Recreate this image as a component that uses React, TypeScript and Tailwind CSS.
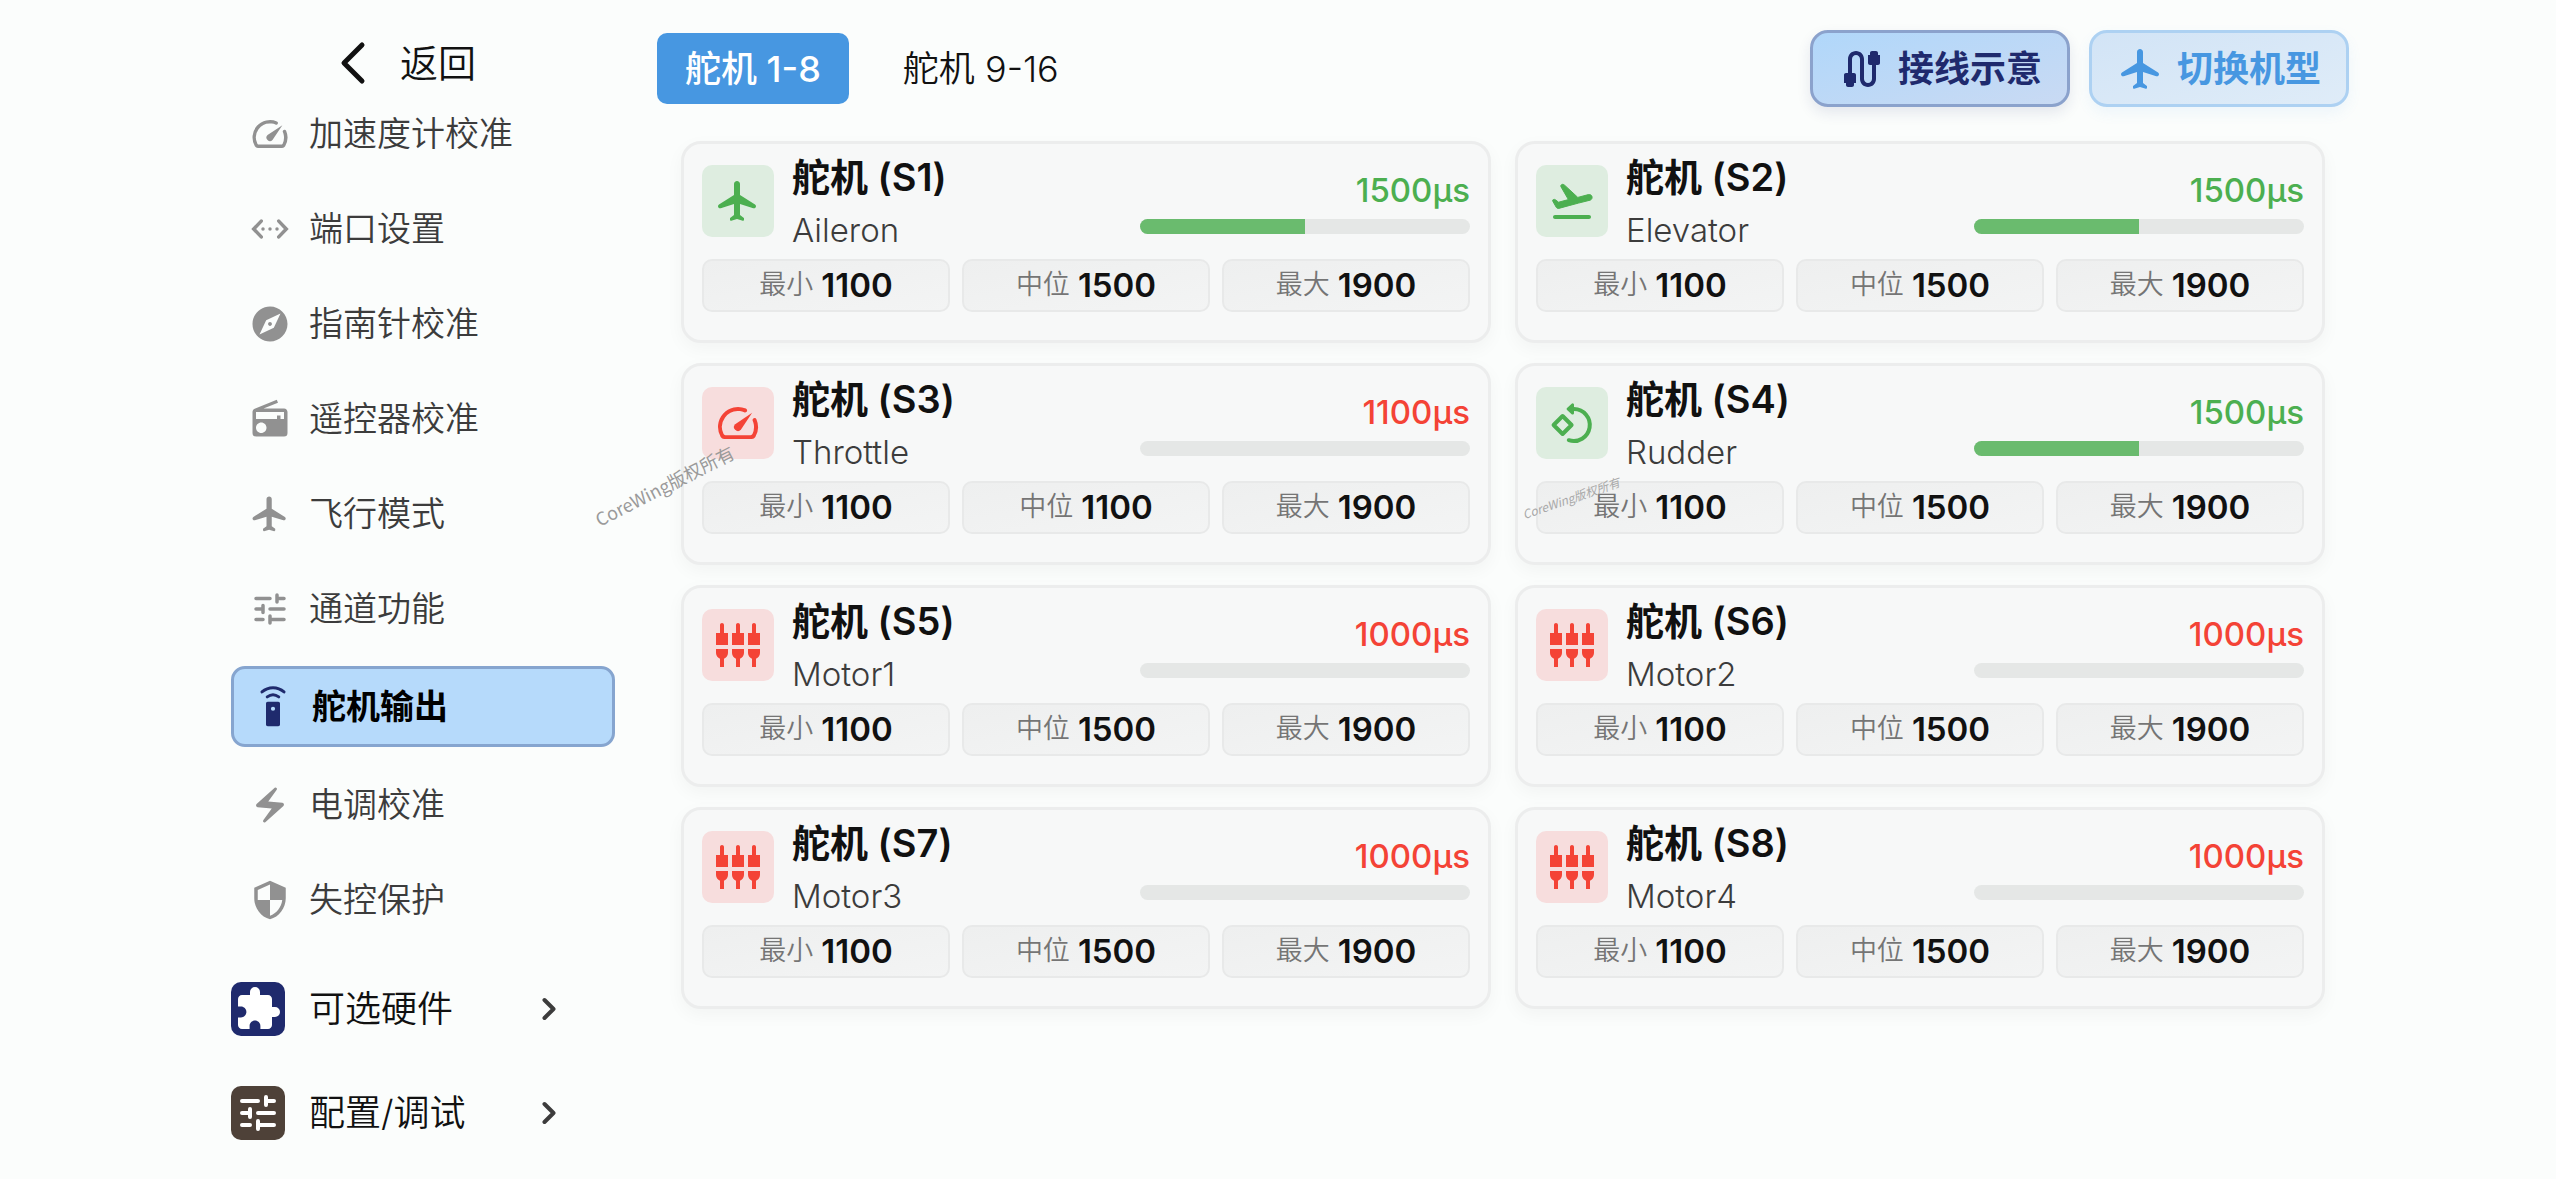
import type { ComponentType, ReactNode } from 'react';
import {
  MdCable,
  MdExplore,
  MdExtension,
  MdRadio,
  MdSecurity,
  MdSettingsInputComponent,
} from 'react-icons/md';

type IconProps = { className?: string };
type Icon = ComponentType<IconProps>;

function Svg({ className, children }: IconProps & { children: ReactNode }) {
  return (
    <svg viewBox="0 0 24 24" fill="currentColor" className={className} aria-hidden="true">
      {children}
    </svg>
  );
}

function FlightIcon({ className }: IconProps) {
  return (
    <Svg className={className}>
      <path d="M21 14.58c0-.36-.19-.69-.49-.89L13 9V3.5c0-.83-.67-1.5-1.5-1.5S10 2.67 10 3.5V9l-7.51 4.69c-.3.19-.49.53-.49.89 0 .7.68 1.21 1.36 1L10 13.5V19l-1.8 1.35c-.13.09-.2.24-.2.4v.59c0 .33.32.57.64.48L11.5 21l2.86.82c.32.09.64-.15.64-.48v-.59c0-.16-.07-.31-.2-.4L13 19v-5.5l6.64 2.08c.68.21 1.36-.3 1.36-1z" />
    </Svg>
  );
}

function SpeedIcon({ className }: IconProps) {
  return (
    <Svg className={className}>
      <path d="M19.46 10a1 1 0 0 0-.07 1 7.55 7.55 0 0 1 .52 1.81 8 8 0 0 1-.69 4.73 1 1 0 0 1-.89.53H5.68a1 1 0 0 1-.89-.54A8 8 0 0 1 13 6.06a7.69 7.69 0 0 1 2.11.56 1 1 0 0 0 1-.07 1 1 0 0 0-.17-1.76A10 10 0 0 0 3.35 19a2 2 0 0 0 1.72 1h13.85a2 2 0 0 0 1.74-1 10 10 0 0 0 .55-8.89 1 1 0 0 0-1.75-.11z" />
      <path d="M10.59 12.59a2 2 0 0 0 2.83 2.83l5.66-8.49z" />
    </Svg>
  );
}

function EthernetIcon({ className }: IconProps) {
  return (
    <Svg className={className}>
      <path
        d="M7 7.5 2.7 12 7 16.500M17 7.500 21.300 12 17 16.500"
        fill="none"
        stroke="currentColor"
        strokeWidth="2"
        strokeLinecap="round"
      />
      <circle cx="8" cy="12" r="1" />
      <circle cx="12" cy="12" r="1" />
      <circle cx="16" cy="12" r="1" />
    </Svg>
  );
}

function TuneIcon({ className }: IconProps) {
  return (
    <Svg className={className}>
      <g fill="none" stroke="currentColor" strokeWidth="2" strokeLinecap="round">
        <path d="M4 6h8M16 4v4M16 6h4" />
        <path d="M4 12h4M8 10v4M12 12h8" />
        <path d="M4 18h4M12 16v4M12 18h8" />
      </g>
    </Svg>
  );
}

function RemoteIcon({ className }: IconProps) {
  return (
    <Svg className={className}>
      <path
        fillRule="evenodd"
        d="M15 9H9c-.55 0-1 .45-1 1v12c0 .55.45 1 1 1h6c.55 0 1-.45 1-1V10c0-.55-.45-1-1-1zm-3 5.200a1.200 1.200 0 1 1 0-2.400 1.200 1.200 0 0 1 0 2.400z"
      />
      <path
        d="M8.700 6.200c2-1.500 4.600-1.500 6.600 0M5.700 3.400c3.700-3.200 8.900-3.200 12.600 0"
        fill="none"
        stroke="currentColor"
        strokeWidth="1.700"
        strokeLinecap="round"
      />
    </Svg>
  );
}

function BoltIcon({ className }: IconProps) {
  return (
    <Svg className={className}>
      <path d="M14.690 2.210 4.330 11.490c-.64.58-.28 1.650.58 1.730L13 14l-4.850 6.760c-.22.31-.19.74.08 1.010.3.3.77.31 1.080.02l10.360-9.280c.64-.58.28-1.650-.58-1.730L11 10l4.850-6.760c.22-.31.19-.74-.08-1.010a.77.77 0 0 0-1.080-.02z" />
    </Svg>
  );
}

function TakeoffIcon({ className }: IconProps) {
  return (
    <Svg className={className}>
      <path d="M20.500 19h-17c-.55 0-1 .45-1 1s.45 1 1 1h17c.55 0 1-.45 1-1s-.45-1-1-1z" />
      <path
        stroke="currentColor"
        strokeWidth=".5"
        strokeLinejoin="round"
        d="M22 9.800c-.21-.8-1-1.200-1.800-1L14.900 10.200 8.300 4.100c-.4-.4-.9-.5-1.300-.4-.5.2-.8.7-.5 1.200l3.700 6.400-4.900 1.300-1.600-1.200c-.3-.3-.7-.2-1-.1-.4.1-.5.5-.3.800l1.700 3c.3.500.8.700 1.300.6l5.500-1.500 4.350-1.160L21 11.600c.8-.2 1.200-1 1-1.800z"
      />
    </Svg>
  );
}

function RotateIcon({ className }: IconProps) {
  return (
    <Svg className={className}>
      <g fill="none" stroke="currentColor" strokeWidth="2" strokeLinecap="round" strokeLinejoin="round">
        <path d="M7.300 8.500 11.800 13l-4.500 4.500L2.800 13z" />
        <path d="M13 5a8 8 0 1 1-2.600 15.600" />
      </g>
      <path
        d="M12.300 2.900v4.200L10 5z"
        stroke="currentColor"
        strokeWidth="1.400"
        strokeLinejoin="round"
      />
    </Svg>
  );
}

function ChevronRight({ className }: IconProps) {
  return (
    <svg viewBox="0 0 14 24" fill="none" stroke="currentColor" strokeWidth="4" strokeLinecap="round" strokeLinejoin="round" className={className} aria-hidden="true">
      <path d="M2.500 3 11.500 12l-9 9" />
    </svg>
  );
}

function ChevronBack({ className }: IconProps) {
  return (
    <svg viewBox="0 0 26 44" fill="none" stroke="currentColor" strokeWidth="5" strokeLinecap="round" strokeLinejoin="round" className={className} aria-hidden="true">
      <path d="M22 4 4 22l18 18" />
    </svg>
  );
}

const navItems: { label: string; icon: Icon; active?: boolean }[] = [
  { label: '加速度计校准', icon: SpeedIcon },
  { label: '端口设置', icon: EthernetIcon },
  { label: '指南针校准', icon: MdExplore },
  { label: '遥控器校准', icon: MdRadio },
  { label: '飞行模式', icon: FlightIcon },
  { label: '通道功能', icon: TuneIcon },
  { label: '舵机输出', icon: RemoteIcon, active: true },
  { label: '电调校准', icon: BoltIcon },
  { label: '失控保护', icon: MdSecurity },
];

type Servo = {
  id: string;
  role: string;
  icon: Icon;
  tone: 'green' | 'red';
  value: number;
  percent: number;
  mid: number;
};

const servos: Servo[] = [
  { id: 'S1', role: 'Aileron', icon: FlightIcon, tone: 'green', value: 1500, percent: 50, mid: 1500 },
  { id: 'S2', role: 'Elevator', icon: TakeoffIcon, tone: 'green', value: 1500, percent: 50, mid: 1500 },
  { id: 'S3', role: 'Throttle', icon: SpeedIcon, tone: 'red', value: 1100, percent: 0, mid: 1100 },
  { id: 'S4', role: 'Rudder', icon: RotateIcon, tone: 'green', value: 1500, percent: 50, mid: 1500 },
  { id: 'S5', role: 'Motor1', icon: MdSettingsInputComponent, tone: 'red', value: 1000, percent: 0, mid: 1500 },
  { id: 'S6', role: 'Motor2', icon: MdSettingsInputComponent, tone: 'red', value: 1000, percent: 0, mid: 1500 },
  { id: 'S7', role: 'Motor3', icon: MdSettingsInputComponent, tone: 'red', value: 1000, percent: 0, mid: 1500 },
  { id: 'S8', role: 'Motor4', icon: MdSettingsInputComponent, tone: 'red', value: 1000, percent: 0, mid: 1500 },
];

function Limit({ label, value }: { label: string; value: number }) {
  return (
    <div className="flex h-[53px] items-center justify-center gap-2 rounded-[10px] border-2 border-[#e8e9e9] bg-linear-to-br from-[#eeefef] to-[#f3f4f4]">
      <span className="text-[27px] font-[350] text-[#757575]">{label}</span>
      <span className="text-[33px] font-semibold text-[#111111]">{value}</span>
    </div>
  );
}

function ServoCard({ servo }: { servo: Servo }) {
  const green = servo.tone === 'green';
  const ServoIcon = servo.icon;
  return (
    <article className="rounded-[20px] border-3 border-[#eceded] bg-[#f7f8f8] px-[18px] pt-[7px] pb-7 shadow-[0_6px_18px_rgba(0,0,0,0.04)]">
      <div className="flex h-[100px] items-center gap-[18px]">
        <div
          className={
            green
              ? 'flex size-[72px] items-center justify-center rounded-[10px] bg-[#deede0] text-[#4caf50]'
              : 'flex size-[72px] items-center justify-center rounded-[10px] bg-[#f7dddd] text-[#f44336]'
          }
        >
          <ServoIcon className="size-12" />
        </div>
        <div className="flex-1">
          <h2 className="text-[38px] leading-[58px] font-semibold text-[#111111]">舵机 ({servo.id})</h2>
          <p className="text-[33px] leading-[48px] font-[350] text-[#3c3c3c]">{servo.role}</p>
        </div>
        <div className="w-[330px]">
          <p
            className={
              green
                ? 'text-right text-[33px] leading-[44px] font-medium text-[#4caf50]'
                : 'text-right text-[33px] leading-[44px] font-medium text-[#f44336]'
            }
          >
            {servo.value}µs
          </p>
          <div
            role="progressbar"
            aria-label={`舵机 ${servo.id}`}
            aria-valuenow={servo.percent}
            className="mt-[7px] h-[15px] overflow-hidden rounded-full bg-[#e5e7e6]"
          >
            <div className="h-full bg-[#6abb6e]" style={{ width: `${servo.percent}%` }} />
          </div>
        </div>
      </div>
      <div className="mt-2 grid grid-cols-3 gap-3">
        <Limit label="最小" value={1100} />
        <Limit label="中位" value={servo.mid} />
        <Limit label="最大" value={1900} />
      </div>
    </article>
  );
}

function GroupButton({ label, children }: { label: string; children: ReactNode }) {
  return (
    <button type="button" className="flex h-[104px] w-full items-center gap-6 pr-[59px] text-[36px] font-[350] text-[#111111]">
      {children}
      <span className="flex-1 text-left">{label}</span>
      <ChevronRight className="h-6 w-[14px] text-[#3c3c3c]" />
    </button>
  );
}

export default function App() {
  return (
    <div className="relative flex min-h-screen gap-[42px] overflow-hidden bg-[#fbfdfc] pr-[207px] pl-[231px] font-['Inter','Noto_Sans_CJK_SC',sans-serif]">
      <aside className="w-[384px] shrink-0">
        <div className="h-24 pt-7">
          <button type="button" className="ml-[109px] flex h-[70px] items-center gap-[34px] text-[38px] font-[350] text-[#111111]">
            <ChevronBack className="h-11 w-[26px]" />
            返回
          </button>
        </div>
        <nav className="flex flex-col gap-5">
          {navItems.map(({ label, icon: NavIcon, active }) => (
            <button
              key={label}
              type="button"
              aria-current={active ? 'page' : undefined}
              className={
                active
                  ? 'flex h-[81px] items-center gap-[18px] rounded-[14px] border-3 border-[#86a5cf] bg-[#b6dafb] px-[18px] text-[34px] font-semibold text-black'
                  : 'flex h-[75px] items-center gap-[18px] px-[18px] text-[34px] font-[350] text-[#3c3c3c]'
              }
            >
              <NavIcon className={active ? 'size-[42px] text-[#1f2a6d]' : 'size-[42px] text-[#919191]'} />
              {label}
            </button>
          ))}
        </nav>
        <div className="mt-5">
          <GroupButton label="可选硬件">
            <span className="flex size-[54px] items-center justify-center rounded-[10px] bg-[#1f2a6d] text-white">
              <MdExtension className="size-12" />
            </span>
          </GroupButton>
          <GroupButton label="配置/调试">
            <span className="flex size-[54px] items-center justify-center rounded-[10px] bg-[#4e4138] text-white">
              <TuneIcon className="size-12" />
            </span>
          </GroupButton>
        </div>
      </aside>

      <main className="min-w-0 flex-1 pt-[30px]">
        <header className="flex h-[77px] items-center justify-between">
          <div role="tablist" className="flex gap-[26px] text-[36px]">
            <button role="tab" type="button" aria-selected="true" className="h-[71px] rounded-[10px] bg-[#4797e1] px-7 font-medium text-white">
              舵机 1-8
            </button>
            <button role="tab" type="button" aria-selected="false" className="h-[71px] px-7 font-[350] text-[#111111]">
              舵机 9-16
            </button>
          </div>
          <div className="flex gap-[19px] text-[36px] font-semibold">
            <button
              type="button"
              className="flex h-[77px] w-[260px] items-center justify-center gap-3 rounded-[18px] border-3 border-[#8ba2cc] bg-linear-to-br from-[#b0d7fa] to-[#c9daf3] text-[#1f2a6d] shadow-[0_6px_14px_rgba(31,42,109,0.1)]"
            >
              <MdCable className="size-12" />
              接线示意
            </button>
            <button
              type="button"
              className="flex h-[77px] w-[260px] items-center justify-center gap-3 rounded-[18px] border-3 border-[#add1f2] bg-linear-to-br from-[#d2e4f6] to-[#dfecf8] text-[#4797e1] shadow-[0_6px_14px_rgba(71,151,225,0.08)]"
            >
              <FlightIcon className="size-12" />
              切换机型
            </button>
          </div>
        </header>
        <section className="mt-[34px] grid grid-cols-2 gap-x-6 gap-y-5 px-6">
          {servos.map((servo) => (
            <ServoCard key={servo.id} servo={servo} />
          ))}
        </section>
      </main>

      <span className="pointer-events-none absolute top-[472px] left-[588px] -rotate-27 font-['Noto_Sans_CJK_SC',sans-serif] text-[18px] text-[#9a9a9a]">
        CoreWing版权所有
      </span>
      <span className="pointer-events-none absolute top-[489px] left-[1520px] -rotate-19 font-['Noto_Sans_CJK_SC',sans-serif] text-[12px] text-[#a8a8a8] italic">
        CoreWing版权所有
      </span>
    </div>
  );
}
